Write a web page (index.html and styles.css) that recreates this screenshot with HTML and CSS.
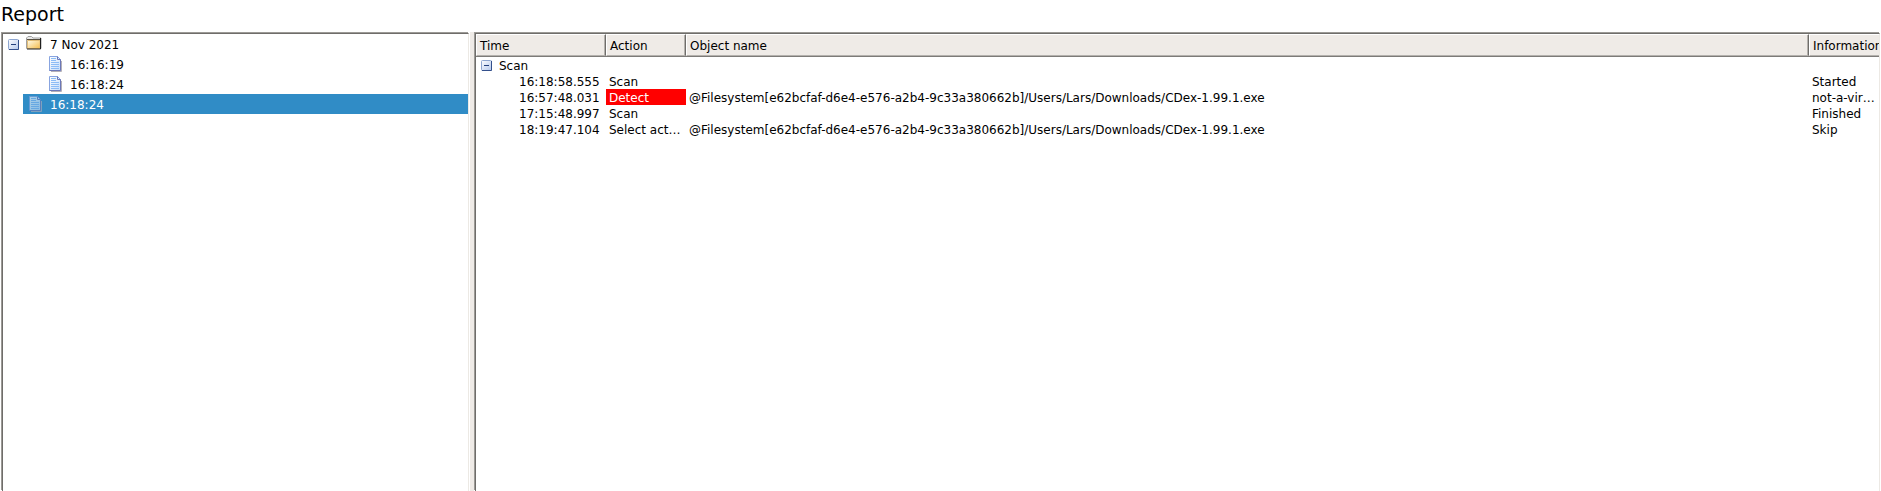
FILE: index.html
```html
<!DOCTYPE html>
<html lang="en">
<head>
    <meta charset="UTF-8">
    <meta name="viewport" content="width=device-width, initial-scale=1.0">
    <title>Report</title>
    <link rel="stylesheet" href="styles.css">
</head>
<body>
    <!-- shared icons -->
    <svg class="defs" width="0" height="0">
        <defs>
            <linearGradient id="box-fill" x1="0" y1="0" x2="1" y2="1">
                <stop offset="0" stop-color="#ffffff"/>
                <stop offset="1" stop-color="#b4c8ec"/>
            </linearGradient>
            <linearGradient id="doc-fill" x1="0" y1="0" x2="1" y2="1">
                <stop offset="0" stop-color="#ffffff"/>
                <stop offset="1" stop-color="#c4dcfa"/>
            </linearGradient>
            <linearGradient id="folder-fill" x1="0" y1="0" x2="1" y2="1">
                <stop offset="0" stop-color="#fffbe8"/>
                <stop offset="1" stop-color="#f4bc4c"/>
            </linearGradient>
            <symbol id="minus" viewBox="0 0 11 11">
                <rect x="0.5" y="0.5" width="10" height="10" rx="1" fill="url(#box-fill)" stroke="#8ea6d0"/>
                <path d="M10.5 1v9.5H1" fill="none" stroke="#34508c"/>
                <path d="M3 5.5h5" stroke="#24407c"/>
            </symbol>
            <symbol id="doc" viewBox="0 0 14 16">
                <path d="M2 15.5h10.5V5" fill="none" stroke="#b4b0b8"/>
                <path d="M0.5 0.5h8l3 3v11h-11z" fill="url(#doc-fill)" stroke="#88a4e0"/>
                <path d="M8.5 0.5v3h3v11h-11" fill="none" stroke="#6c78b8"/>
                <path d="M2 2.5h5M2 4.5h5M2 6.5h8M2 8.5h8M2 10.5h8M2 12.5h8" stroke="#8cbcf6"/>
            </symbol>
            <symbol id="folder" viewBox="0 0 16 14">
                <path d="M0.5 12.5V2l1.5-1.5h3.5L7 2h8v10.5z" fill="#e8e8e8" stroke="#a0a0a0"/>
                <path d="M1.5 4.5h12.5v8H1.5z" fill="url(#folder-fill)" stroke="#e0bc78"/>
                <path d="M1 3.5h13" stroke="#585040"/>
                <path d="M14.5 2v11H1" fill="none" stroke="#202020"/>
            </symbol>
        </defs>
    </svg>

    <h1 class="title">Report</h1>

    <div class="container">
        <div class="tree">
            <div class="node">
                <svg class="minus"><use href="#minus"/></svg>
                <svg class="folder"><use href="#folder"/></svg>
                <span>7 Nov 2021</span>
            </div>
            <div class="node child">
                <svg class="doc"><use href="#doc"/></svg>
                <span>16:16:19</span>
            </div>
            <div class="node child">
                <svg class="doc"><use href="#doc"/></svg>
                <span>16:18:24</span>
            </div>
            <div class="node selected">
                <svg class="doc"><use href="#doc"/></svg>
                <span>16:18:24</span>
            </div>
        </div>

        <div class="splitter"></div>

        <div class="list">
            <div class="row header">
                <span>Time</span>
                <span>Action</span>
                <span>Object name</span>
                <span>Information</span>
            </div>
            <div class="group">
                <svg class="minus"><use href="#minus"/></svg>
                <span>Scan</span>
            </div>
            <div class="row">
                <span class="time">16:18:58.555</span>
                <span>Scan</span>
                <span></span>
                <span>Started</span>
            </div>
            <div class="row">
                <span class="time">16:57:48.031</span>
                <span class="detect">Detect</span>
                <span>@Filesystem[e62bcfaf-d6e4-e576-a2b4-9c33a380662b]/Users/Lars/Downloads/CDex-1.99.1.exe</span>
                <span>not-a-vir…</span>
            </div>
            <div class="row">
                <span class="time">17:15:48.997</span>
                <span>Scan</span>
                <span></span>
                <span>Finished</span>
            </div>
            <div class="row">
                <span class="time">18:19:47.104</span>
                <span>Select act…</span>
                <span>@Filesystem[e62bcfaf-d6e4-e576-a2b4-9c33a380662b]/Users/Lars/Downloads/CDex-1.99.1.exe</span>
                <span>Skip</span>
            </div>
        </div>
    </div>
</body>
</html>
```
FILE: styles.css
```css
* {
    box-sizing: border-box;
}
body {
    margin: 0;
    height: 491px;
    overflow: hidden;
    display: flex;
    flex-direction: column;
    font-family: "DejaVu Sans", sans-serif;
    font-size: 12px;
    background: white;
    color: black;
}
.defs {
    position: absolute;
}
.title {
    margin: 0;
    height: 32px;
    padding-left: 1px;
    font-size: 19px;
    font-weight: normal;
    line-height: 29px;
}
.container {
    flex: 1;
    display: flex;
    padding: 1px 1px 0 2px;
}
/* sunken panels: dark inner line, lighter outer line */
.tree, .list {
    border: 1px solid #6f6d6a;
    border-right: 1px solid #ece9e4;
    border-bottom: none;
    box-shadow: -1px -1px 0 #9c9a96;
}
.tree {
    width: 467px;
}
.node {
    display: flex;
    align-items: center;
    height: 20px;
    line-height: 20px;
}
.node span {
    padding-top: 1px;
}
.node .minus {
    margin: 0 7px 0 5px;
}
.node .folder {
    margin: 0 8px 2px 0;
}
.child {
    padding-left: 46px;
}
.selected {
    margin-left: 20px;
    padding-left: 6px;
    background: #308cc6;
    color: white;
}
.minus {
    width: 11px;
    height: 11px;
}
.folder {
    width: 16px;
    height: 14px;
}
.doc {
    width: 14px;
    height: 16px;
    margin: 0 7px 1px 0;
}
.selected .doc {
    opacity: 0.6;
}
.splitter {
    width: 4px;
    margin: -1px 1px 0 1px;
    background: #efebe7;
}
.list {
    flex: 1;
    overflow: hidden;
}
.row {
    display: grid;
    grid-template-columns: 130px 80px 1123px 70px;
    height: 16px;
    line-height: 18px;
}
.row span {
    height: 16px;
    padding-left: 3px;
    white-space: nowrap;
    overflow: hidden;
}
.row .time {
    padding-left: 43px;
}
.row .detect {
    background: red;
    color: white;
}
.header {
    height: 23px;
    line-height: 22px;
    background: #efebe7;
    border-bottom: 1px solid #7d7b78;
}
.header span {
    height: 22px;
    padding-left: 3px;
    border-top: 1px solid white;
    border-left: 1px solid white;
    border-right: 1px solid #6f6d6a;
    border-bottom: 1px solid #b4b1ad;
    box-shadow: inset -1px 0 0 #b4b1ad;
}
.header span:last-child {
    border-right: none;
    box-shadow: none;
}
.group {
    display: flex;
    align-items: center;
    height: 16px;
    padding-left: 5px;
}
.group span {
    padding-top: 1px;
}
.group .minus {
    margin-right: 7px;
}
```
